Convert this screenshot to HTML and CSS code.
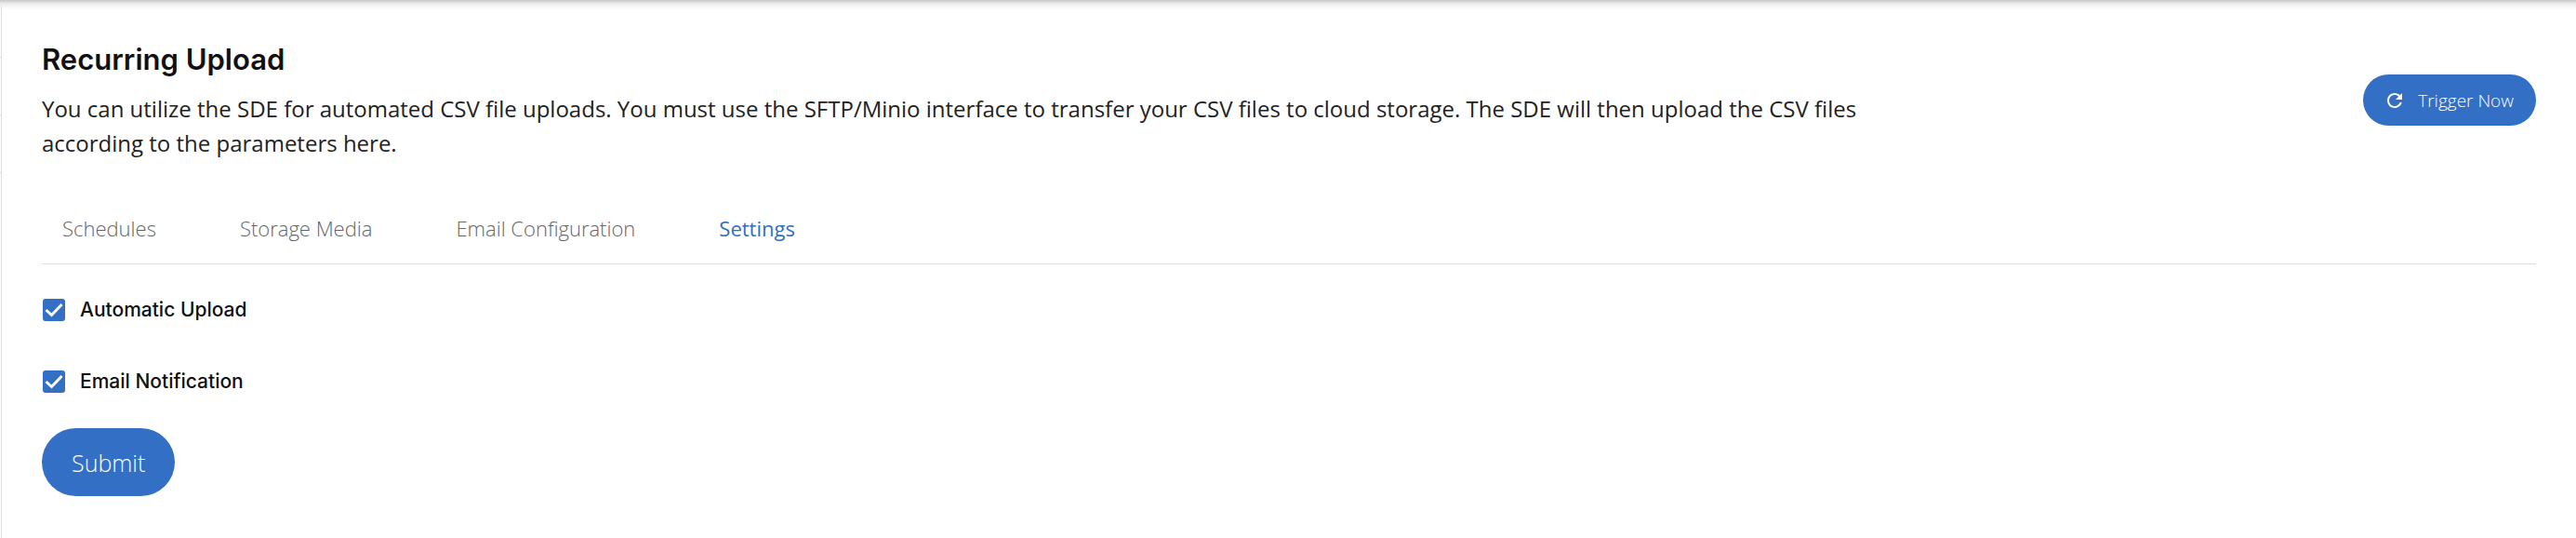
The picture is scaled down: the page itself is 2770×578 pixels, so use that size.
FILE: index.html
```html
<!DOCTYPE html>
<html lang="en">
<head>
<meta charset="utf-8">
<title>Recurring Upload</title>
<link rel="stylesheet" href="styles.css">
</head>
<body>
<div class="topbar-shadow"></div>
<div class="shell">
<div class="rail" aria-hidden="true">
  <div class="rail-item"></div>
  <div class="rail-item"></div>
  <div class="rail-item"></div>
</div>
<main class="page">
  <header class="header">
    <div class="intro">
      <h1 class="title">Recurring Upload</h1>
      <p class="lead">You can utilize the SDE for automated CSV file uploads. You must use the SFTP/Minio interface to transfer your CSV files to cloud storage. The SDE will then upload the CSV files<br>according to the parameters here.</p>
    </div>
    <button class="button trigger" type="button">
      <svg class="trigger-icon" viewBox="0 0 24 24" aria-hidden="true"><path fill="currentColor" d="M17.65 6.35C16.2 4.9 14.21 4 12 4c-4.42 0-7.99 3.58-7.99 8s3.57 8 7.99 8c3.73 0 6.84-2.55 7.73-6h-2.08c-.82 2.33-3.04 4-5.65 4-3.31 0-6-2.69-6-6s2.69-6 6-6c1.66 0 3.14.69 4.22 1.78L13 11h7V4l-2.35 2.35z"/></svg>
      Trigger Now
    </button>
  </header>
  <nav class="tabs">
    <a class="tab" href="#schedules">Schedules</a>
    <a class="tab" href="#storage">Storage Media</a>
    <a class="tab" href="#email">Email Configuration</a>
    <a class="tab tab-active" href="#settings" aria-current="page">Settings</a>
  </nav>
  <form class="settings">
    <label class="option"><span class="box"><input class="check" type="checkbox" checked><svg class="tick" viewBox="0 0 24 24" aria-hidden="true"><path d="M3.5 12l6 5.500L20.500 6"/></svg></span>Automatic Upload</label>
    <label class="option"><span class="box"><input class="check" type="checkbox" checked><svg class="tick" viewBox="0 0 24 24" aria-hidden="true"><path d="M3.5 12l6 5.500L20.500 6"/></svg></span>Email Notification</label>
    <button class="button submit" type="button">Submit</button>
  </form>
</main>
</div>
</body>
</html>
```
FILE: styles.css
```css
* { box-sizing: border-box; }
body {
  margin: 0;
  background: #fff;
  color: #111;
  font-family: "Open Sans", "Liberation Sans", sans-serif;
}
.topbar-shadow {
  position: absolute;
  inset: 0 0 auto;
  height: 10px;
  background: linear-gradient(#c8c8c8, #ececec 40%, rgba(255, 255, 255, 0));
}
.shell { display: flex; min-height: 100vh; }
.rail { flex: none; width: 1px; }
.rail-item { height: 62px; border-bottom: 1px solid #ddd; }
.page {
  flex: 1;
  padding: 43px;
  border-left: 1px solid #ddd;
}
.header {
  display: flex;
  align-items: center;
  justify-content: space-between;
  padding-bottom: 36px;
}
.title {
  margin: 0;
  font-family: Inter, "Liberation Sans", sans-serif;
  font-size: 31px;
  line-height: 42px;
  font-weight: 600;
}
.lead { margin: 13px 0 0; color: #222; font-size: 24px; line-height: 37px; }
.button {
  border: 0;
  border-radius: 40px;
  background: #326fc5;
  color: #fff;
  font-family: inherit;
  font-weight: 300;
}
.trigger {
  display: flex;
  align-items: center;
  gap: 13px;
  height: 55px;
  padding: 0 24px 0 22px;
  font-size: 19px;
}
.trigger-icon { width: 24px; height: 24px; }
.tabs {
  display: flex;
  gap: 90px;
  padding: 19px 22px 20px;
  border-bottom: 1px solid #ddd;
}
.tab {
  color: #666;
  font-size: 22px;
  line-height: 36px;
  font-weight: 300;
  text-decoration: none;
}
.tab-active { color: #326fc5; font-weight: 400; }
.settings {
  display: flex;
  flex-direction: column;
  align-items: flex-start;
  padding-top: 31px;
}
.option {
  display: flex;
  align-items: center;
  gap: 16px;
  margin-bottom: 41px;
  padding-left: 1px;
  font-family: Inter, "Liberation Sans", sans-serif;
  font-size: 21px;
  line-height: 36px;
  font-weight: 500;
}
.option:last-of-type { margin-bottom: 32px; }
.box { display: grid; }
.check, .tick { grid-area: 1 / 1; width: 24px; height: 24px; margin: 0; }
.check { appearance: none; border-radius: 3px; background: #ddd; }
.check:checked { background: #326fc5; }
.tick { visibility: hidden; fill: none; stroke: #fff; stroke-width: 3; pointer-events: none; }
.check:checked + .tick { visibility: visible; }
.submit { height: 73px; padding: 0 32px; font-size: 25px; }
```
